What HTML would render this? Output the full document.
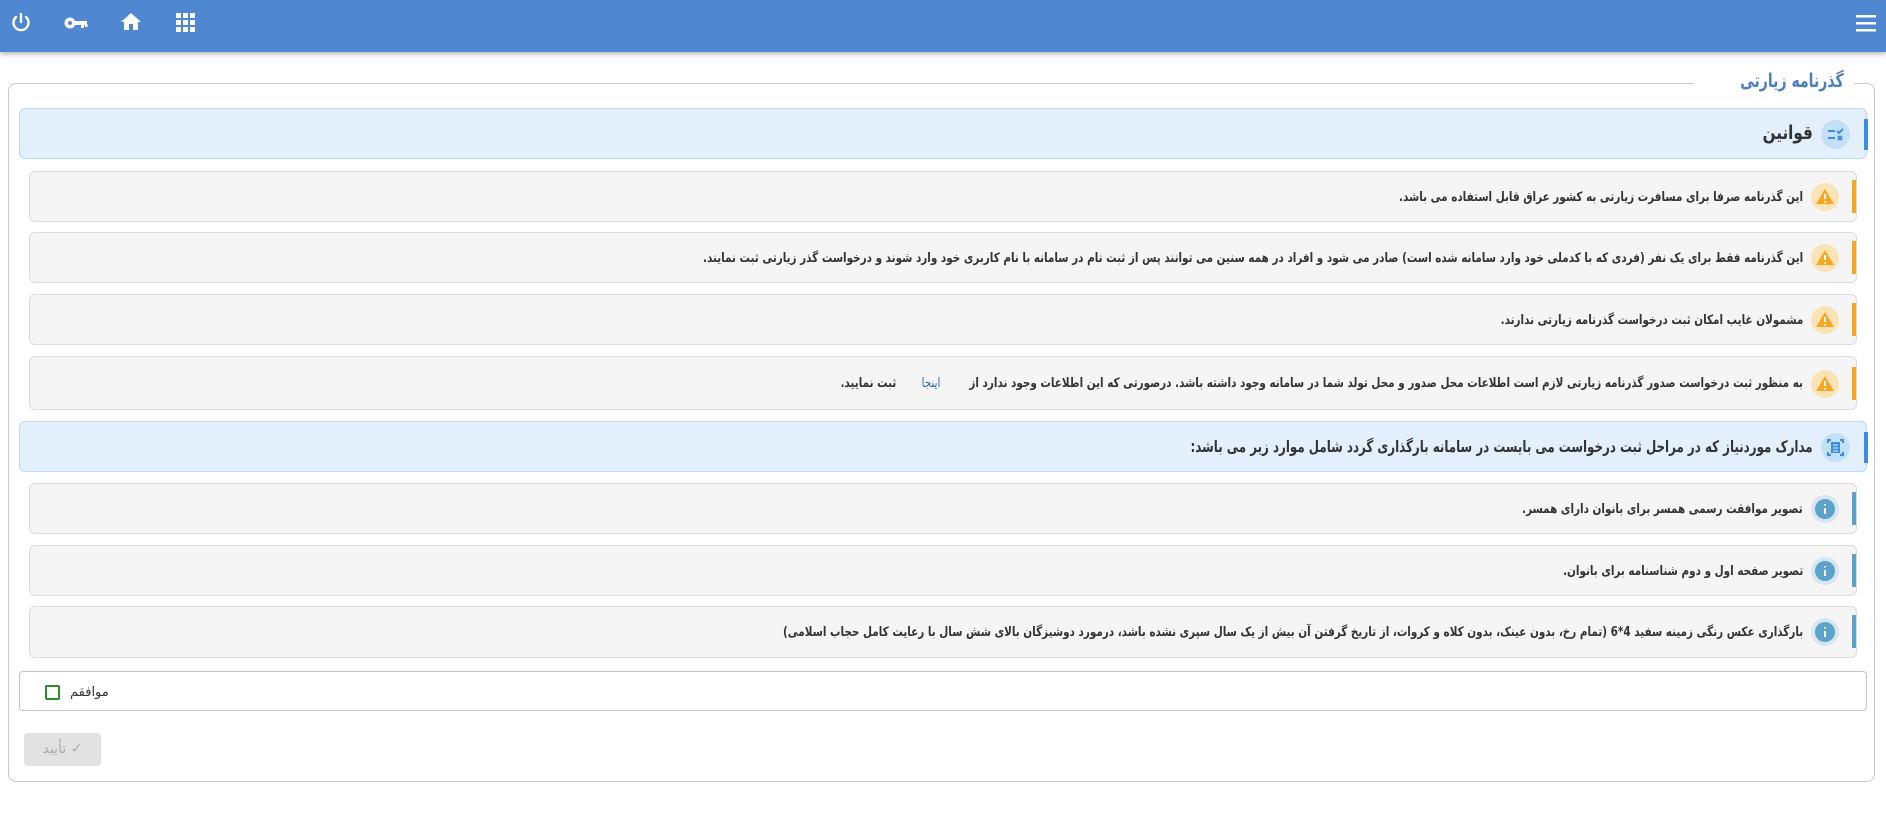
<!DOCTYPE html>
<html><head><meta charset="utf-8"><style>
*{box-sizing:border-box;margin:0;padding:0}
body{width:1886px;height:816px;background:#fff;font-family:"DejaVu Sans",sans-serif;position:relative;overflow:hidden;color:#333}
.nav{position:absolute;left:0;top:0;width:1886px;height:52px;background:#4f88d0;box-shadow:0 2px 5px rgba(0,0,0,.3)}
.nav svg{position:absolute}
.fs{position:absolute;left:8px;top:83px;width:1867px;height:699px;border:1px solid #c8c8c8;border-radius:8px}
.lg{position:absolute;right:32px;top:70px;background:#fff;padding:0 10px;color:#4a7fc0;font-size:19px;font-weight:bold;direction:rtl}
.lg span{display:inline-block;transform:scaleX(.74);transform-origin:right}
.hd{position:absolute;left:19px;width:1848px;height:51px;background:#e3f0fb;border:1px solid #bcdaf0;border-radius:6px;direction:rtl}
.hd .bar{position:absolute;right:-2px;top:10px;width:4px;height:31px;background:#3a8ee0}
.hd .ic{position:absolute;right:16px;top:11px;width:29px;height:29px;border-radius:50%;background:#c4e0f6}
.hd .t{position:absolute;right:53px;top:14px;font-size:16px;font-weight:bold;color:#333;white-space:nowrap;transform:scaleX(.8);transform-origin:right}
.it{position:absolute;left:29px;width:1828px;height:51px;background:#f5f5f5;border:1px solid #dcdcdc;border-radius:6px;direction:rtl}
.it .bar{position:absolute;right:0;top:8px;width:4px;height:33px;background:#f5a623}
.it.i .bar{background:#5ba3c9}
.it .ic{position:absolute;right:17px;top:11px;width:28px;height:28px;border-radius:50%;background:#fbe3b8}
.it.i .ic{background:#d6e7f1}
.it .t{position:absolute;right:53px;top:18px;font-size:13px;font-weight:bold;white-space:nowrap;transform:scaleX(.8);transform-origin:right}
a{color:#2a6aaf;text-decoration:none;font-weight:normal}
</style></head><body>
<div class="nav">
<svg style="left:9px;top:11px" width="24" height="24" viewBox="0 0 24 24" fill="none" stroke="#fff" stroke-width="2.4" stroke-linecap="round"><path d="M12 3v8"/><path d="M7 6a7.5 7.5 0 1 0 10 0"/></svg>
<svg style="left:63px;top:11px" width="26" height="24" viewBox="0 0 26 24" fill="#fff"><circle cx="7" cy="12" r="5.5"/><rect x="11" y="10" width="13" height="4"/><rect x="18" y="13" width="3" height="4"/><rect x="22" y="13" width="2.5" height="3"/><circle cx="7" cy="12" r="2" fill="#4f88d0"/></svg>
<svg style="left:119px;top:10px" width="24" height="24" viewBox="0 0 24 24" fill="#fff"><path d="M12 3L2 12h3v8h5v-6h4v6h5v-8h3z"/></svg>
<svg style="left:176px;top:13px" width="19" height="19" viewBox="0 0 19 19" fill="#fff"><rect x="0" y="0" width="5" height="5"/><rect x="7" y="0" width="5" height="5"/><rect x="14" y="0" width="5" height="5"/><rect x="0" y="7" width="5" height="5"/><rect x="7" y="7" width="5" height="5"/><rect x="14" y="7" width="5" height="5"/><rect x="0" y="14" width="5" height="5"/><rect x="7" y="14" width="5" height="5"/><rect x="14" y="14" width="5" height="5"/></svg>
<svg style="left:1856px;top:14px" width="20" height="18" viewBox="0 0 20 18" fill="#fff"><rect y="1" width="20" height="2.5"/><rect y="8" width="20" height="2.5"/><rect y="15" width="20" height="2.5"/></svg>
</div>
<div class="fs"></div>
<div class="lg"><span>گذرنامه زیارتی</span></div>

<div class="hd" style="top:108px"><div class="bar"></div><div class="ic"><svg width="29" height="29" viewBox="0 0 29 29" stroke="#3a8ee0" stroke-width="2" fill="none"><path d="M7 11h7M7 18h7M16 11l2 2 4-4M17 16l4 4M21 16l-4 4"/></svg></div><div class="t" style="font-size:19px;top:13px">قوانین</div></div>

<div class="it" style="top:171px"><div class="bar"></div><div class="ic"><svg width="28" height="28" viewBox="0 0 28 28"><path d="M14 6L23 21H5z" fill="#f5a623"/><path d="M14 11v5M14 18v1.5" stroke="#fff" stroke-width="2"/></svg></div><div class="t">این گذرنامه صرفا برای مسافرت زیارتی به کشور عراق قابل استفاده می باشد.</div></div>
<div class="it" style="top:232px"><div class="bar"></div><div class="ic"><svg width="28" height="28" viewBox="0 0 28 28"><path d="M14 6L23 21H5z" fill="#f5a623"/><path d="M14 11v5M14 18v1.5" stroke="#fff" stroke-width="2"/></svg></div><div class="t">این گذرنامه فقط برای یک نفر (فردی که با کدملی خود وارد سامانه شده است) صادر می شود و افراد در همه سنین می توانند پس از ثبت نام در سامانه با نام کاربری خود وارد شوند و درخواست گذر زیارتی ثبت نمایند.</div></div>
<div class="it" style="top:294px"><div class="bar"></div><div class="ic"><svg width="28" height="28" viewBox="0 0 28 28"><path d="M14 6L23 21H5z" fill="#f5a623"/><path d="M14 11v5M14 18v1.5" stroke="#fff" stroke-width="2"/></svg></div><div class="t">مشمولان غایب امکان ثبت درخواست گذرنامه زیارتی ندارند.</div></div>
<div class="it" style="top:356px;height:54px"><div class="bar" style="top:10px"></div><div class="ic" style="top:13px"><svg width="28" height="28" viewBox="0 0 28 28"><path d="M14 6L23 21H5z" fill="#f5a623"/><path d="M14 11v5M14 18v1.5" stroke="#fff" stroke-width="2"/></svg></div><div class="t" style="top:19px">به منظور ثبت درخواست صدور گذرنامه زیارتی لازم است اطلاعات محل صدور و محل تولد شما در سامانه وجود داشته باشد. درصورتی که این اطلاعات وجود ندارد از &nbsp;&nbsp;&nbsp;&nbsp;&nbsp;&nbsp;&nbsp;<a>اینجا</a>&nbsp;&nbsp;&nbsp;&nbsp;&nbsp;&nbsp; ثبت نمایید.</div></div>

<div class="hd" style="top:421px"><div class="bar"></div><div class="ic"><svg width="29" height="29" viewBox="0 0 29 29" stroke="#3a8ee0" stroke-width="2" fill="none"><path d="M7 10V7h3M19 7h3v3M22 19v3h-3M10 22H7v-3"/><rect x="10" y="9" width="9" height="11" fill="#3a8ee0" stroke="none"/><path d="M12 12h5M12 15h5M12 18h5" stroke="#c4e0f6" stroke-width="1.2"/></svg></div><div class="t" style="font-size:16px;top:15px;transform:scaleX(.74)">مدارک موردنیاز که در مراحل ثبت درخواست می بایست در سامانه بارگذاری گردد شامل موارد زیر می باشد:</div></div>

<div class="it i" style="top:483px"><div class="bar"></div><div class="ic"><svg width="28" height="28" viewBox="0 0 28 28"><circle cx="14" cy="14" r="10" fill="#5ba3c9"/><path d="M14 13v6M14 9v1.5" stroke="#fff" stroke-width="2"/></svg></div><div class="t">تصویر موافقت رسمی همسر برای بانوان دارای همسر.</div></div>
<div class="it i" style="top:545px"><div class="bar"></div><div class="ic"><svg width="28" height="28" viewBox="0 0 28 28"><circle cx="14" cy="14" r="10" fill="#5ba3c9"/><path d="M14 13v6M14 9v1.5" stroke="#fff" stroke-width="2"/></svg></div><div class="t">تصویر صفحه اول و دوم شناسنامه برای بانوان.</div></div>
<div class="it i" style="top:606px;height:52px"><div class="bar"></div><div class="ic"><svg width="28" height="28" viewBox="0 0 28 28"><circle cx="14" cy="14" r="10" fill="#5ba3c9"/><path d="M14 13v6M14 9v1.5" stroke="#fff" stroke-width="2"/></svg></div><div class="t">بارگذاری عکس رنگی زمینه سفید 4*6 (تمام رخ، بدون عینک، بدون کلاه و کروات، از تاریخ گرفتن آن بیش از یک سال سپری نشده باشد، درمورد دوشیزگان بالای شش سال با رعایت کامل حجاب اسلامی)</div></div>

<div style="position:absolute;left:19px;top:671px;width:1848px;height:40px;border:1px solid #c4c4c4;border-radius:4px"></div>
<div style="position:absolute;left:45px;top:685px;width:15px;height:15px;border:2px solid #2e8b2e;border-radius:2px"></div>
<div style="position:absolute;left:70px;top:685px;font-size:13px;direction:rtl">موافقم</div>
<div style="position:absolute;left:24px;top:733px;width:77px;height:33px;background:#e2e2e2;border-radius:4px;color:#aaa;font-size:14px;text-align:center;line-height:32px;direction:rtl">✓ تأیید</div>
</body></html>
